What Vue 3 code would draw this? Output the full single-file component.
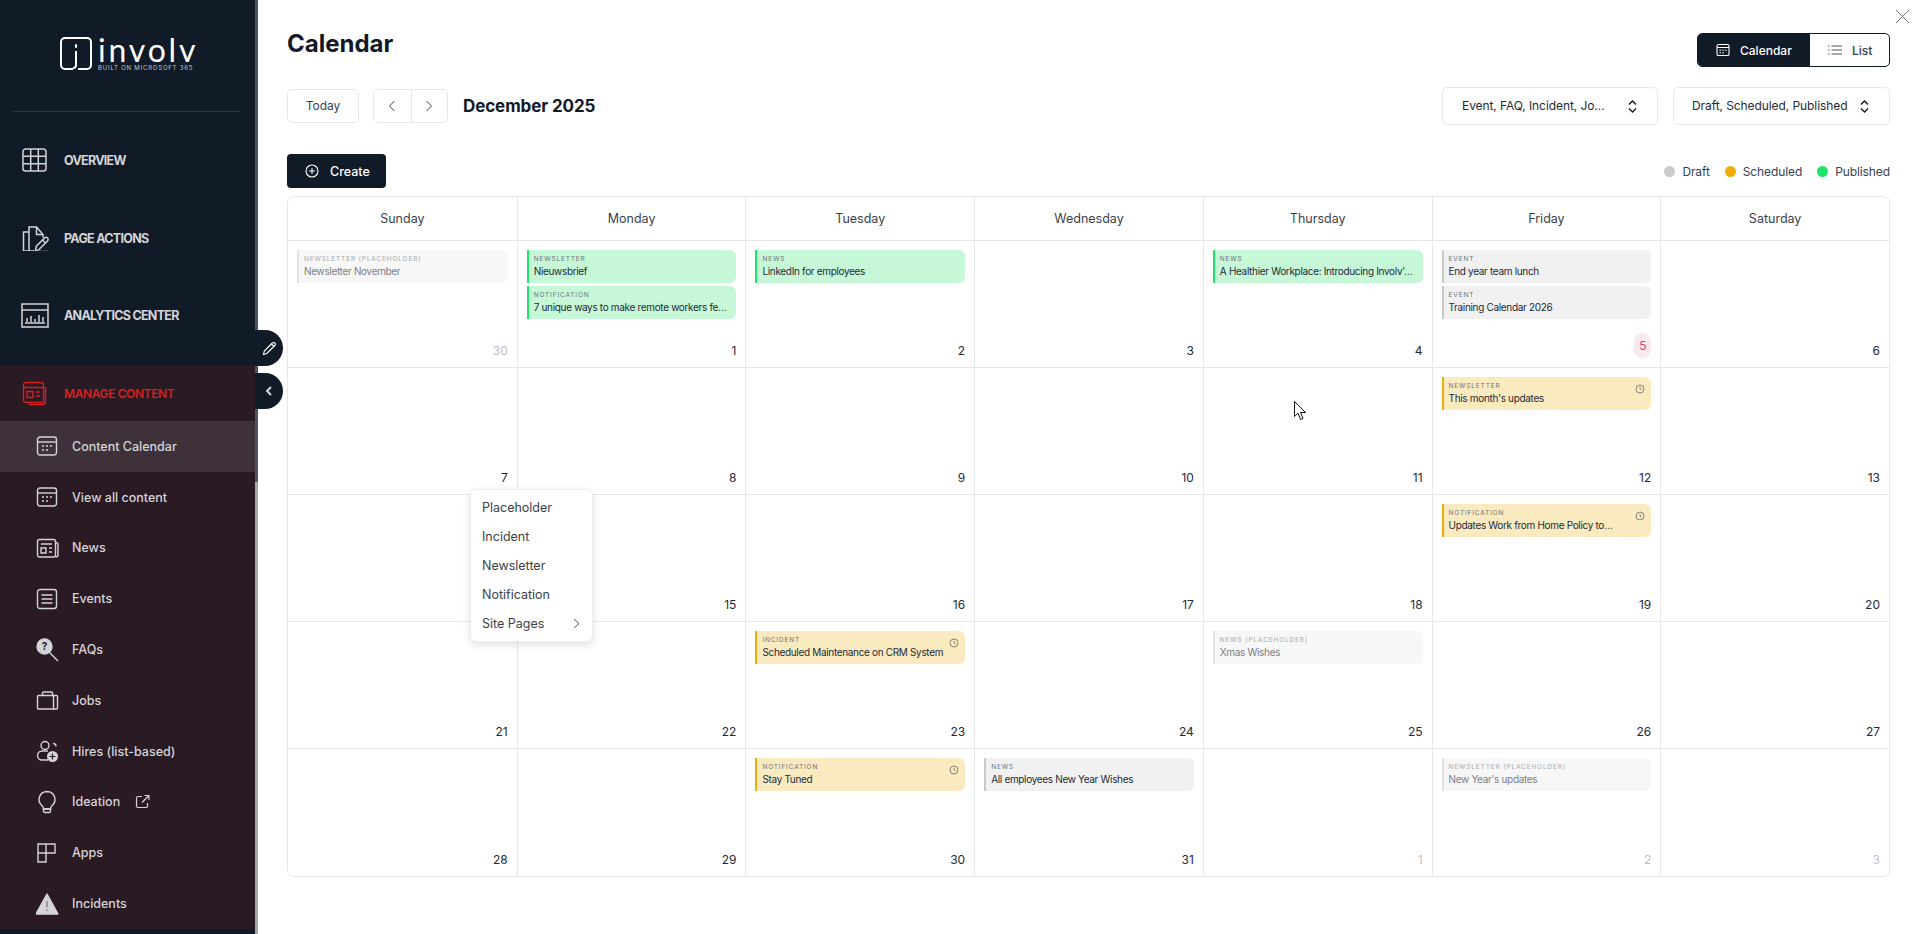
<script setup>
const sideTop = [
  { name: 'OVERVIEW', paths: ['M4.500 1h18a2.500 2.500 0 0 1 2.500 2.500v17a2.500 2.500 0 0 1-2.500 2.500h-18A2.500 2.500 0 0 1 2 20.500v-17A2.500 2.500 0 0 1 4.500 1z', 'M2 8.300h23M2 15.700h23M9.700 1v22M17.300 1v22'] },
  { name: 'PAGE ACTIONS', paths: ['M13 25H8V1h7.500L22 8.500v3', 'M15.500 1v7.500H22', 'M8 6H2.500v19H9', 'M14 26l1.500-6 8-8a2.100 2.100 0 0 1 3 3l-8 8z', 'M21.500 14l3 3', 'M18 25.500h9'] },
  { name: 'ANALYTICS CENTER', paths: ['M1 1h26v23H1z', 'M1 7h26', 'M6 19v-4M10 19v-6M14 19v-3M18 19v-7M22 19v-5', 'M4 20h20'] }
]

const calendarIcon = ['M4 3h14a2.500 2.500 0 0 1 2.500 2.500v13A2.500 2.500 0 0 1 18 21H4a2.500 2.500 0 0 1-2.500-2.500v-13A2.500 2.500 0 0 1 4 3z', 'M1.500 8h19', 'M6 12h2M10 12h2M14 12h2M6 16h2M10 16h2']

const sideItems = [
  { name: 'Content Calendar', active: true, paths: calendarIcon },
  { name: 'View all content', paths: calendarIcon },
  { name: 'News', paths: ['M3.500 3.500h14a2 2 0 0 1 2 2v13.500a2 2 0 0 1-2 2h-14a2 2 0 0 1-2-2V5.500a2 2 0 0 1 2-2z', 'M5 8h11M5 12h5v5H5zM13 12h3M13 16h3', 'M19.500 6.500c1.500 0 2.500.8 2.500 2v10.500c0 1.200-1 2-2.500 2'] },
  { name: 'Events', paths: ['M4 2.500h14A2.500 2.500 0 0 1 20.500 5v14a2.500 2.500 0 0 1-2.500 2.500H4A2.500 2.500 0 0 1 1.500 19V5A2.500 2.500 0 0 1 4 2.500z', 'M5.500 8h11M5.500 12h11M5.500 16h11'] },
  { name: 'FAQs', faq: true, paths: ['M13 14l9 9'] },
  { name: 'Jobs', paths: ['M2.500 7.500h18a1 1 0 0 1 1 1V20a1 1 0 0 1-1 1h-18a1 1 0 0 1-1-1V8.500a1 1 0 0 1 1-1z', 'M6.500 7.500V5a1 1 0 0 1 1-1h8a1 1 0 0 1 1 1v2.500', 'M17.500 7.500V21'] },
  { name: 'Hires (list-based)', hire: true, paths: ['M9 2.500a4 4 0 1 1 0 8 4 4 0 0 1 0-8z', 'M17 4.500a3 3 0 0 1 3 3', 'M12 21H6a4.500 4.500 0 0 1 0-9h6'] },
  { name: 'Ideation', external: true, paths: ['M11 1.500a8 8 0 0 1 5 14.200c-1 .9-1.500 2-1.500 3.300h-7c0-1.300-.5-2.400-1.500-3.300A8 8 0 0 1 11 1.500z', 'M7.500 19h7v2a1.500 1.500 0 0 1-1.500 1.500H9A1.500 1.500 0 0 1 7.500 21z'] },
  { name: 'Apps', paths: ['M2 3h8v9H2zM10 3h9v9h-9zM2 12h8v9H2z'] },
  { name: 'Incidents', warn: true, paths: [] }
]

const weekDays = ['Sunday', 'Monday', 'Tuesday', 'Wednesday', 'Thursday', 'Friday', 'Saturday']

const ev = (type, label, title, clock = false) => ({ type, label, title, clock })

const days = [
  { n: 30, muted: true, events: [ev('ghost', 'Newsletter (placeholder)', 'Newsletter November')] },
  { n: 1, events: [ev('pub', 'Newsletter', 'Nieuwsbrief'), ev('pub', 'Notification', '7 unique ways to make remote workers fe…')] },
  { n: 2, events: [ev('pub', 'News', 'LinkedIn for employees')] },
  { n: 3 },
  { n: 4, events: [ev('pub', 'News', "A Healthier Workplace: Introducing Involv'…")] },
  { n: 5, today: true, events: [ev('draft', 'Event', 'End year team lunch'), ev('draft', 'Event', 'Training Calendar 2026')] },
  { n: 6 },
  { n: 7 }, { n: 8 }, { n: 9 }, { n: 10 }, { n: 11 },
  { n: 12, events: [ev('sched', 'Newsletter', "This month's updates", true)] },
  { n: 13 },
  { n: 14 }, { n: 15 }, { n: 16 }, { n: 17 }, { n: 18 },
  { n: 19, events: [ev('sched', 'Notification', 'Updates Work from Home Policy to…', true)] },
  { n: 20 },
  { n: 21 }, { n: 22 },
  { n: 23, events: [ev('sched', 'Incident', 'Scheduled Maintenance on CRM System', true)] },
  { n: 24 },
  { n: 25, events: [ev('ghost', 'News (placeholder)', 'Xmas Wishes')] },
  { n: 26 }, { n: 27 },
  { n: 28 }, { n: 29 },
  { n: 30, events: [ev('sched', 'Notification', 'Stay Tuned', true)] },
  { n: 31, events: [ev('draft', 'News', 'All employees New Year Wishes')] },
  { n: 1, muted: true },
  { n: 2, muted: true, events: [ev('ghost', 'Newsletter (placeholder)', "New Year's updates")] },
  { n: 3, muted: true }
]

const menu = ['Placeholder', 'Incident', 'Newsletter', 'Notification']
</script>

<template>
  <div class="page">
    <aside class="sidebar">
      <div class="side-scroll">
        <div class="logo">
          <svg class="logo-mark" width="32" height="33" viewBox="0 0 32 33" fill="none" stroke="#fff" stroke-width="2">
            <path d="M13 32H5a4 4 0 0 1-4-4V5a4 4 0 0 1 4-4h22a4 4 0 0 1 4 4v23a4 4 0 0 1-4 4h-9" />
            <path d="M16 14v14a3 3 0 0 1-3 3" />
            <path d="M16 8v2" stroke-linecap="round" />
          </svg>
          <div class="logo-text">
            <div class="logo-name">involv</div>
            <div class="logo-sub">BUILT ON MICROSOFT 365</div>
          </div>
        </div>
        <div class="side-rule"></div>

        <div v-for="item in sideTop" :key="item.name" class="top-item">
          <svg width="28" height="25" viewBox="0 0 28 25" fill="none" stroke="#d4d4d8" stroke-width="1.500">
            <path v-for="d in item.paths" :key="d" :d="d" />
          </svg>
          <span>{{ item.name }}</span>
        </div>

        <div class="manage">
          <div class="manage-head">
            <svg width="25" height="25" viewBox="0 0 25 25" fill="none" stroke="#d81e1e" stroke-width="1.400">
              <path d="M4 1.500h15a2.500 2.500 0 0 1 2.500 2.500v15a2.500 2.500 0 0 1-2.500 2.500H4A2.500 2.500 0 0 1 1.500 19V4A2.500 2.500 0 0 1 4 1.500z" />
              <path d="M1.500 6.500h20M5 10.500h6v6H5zM14 11h4M14 15h4" />
              <path d="M23.500 6v14.500a3 3 0 0 1-3 3H7" />
            </svg>
            <span>MANAGE CONTENT</span>
          </div>
          <div v-for="item in sideItems" :key="item.name" class="side-item" :class="{ active: item.active }">
            <svg class="side-icon" width="24" height="24" viewBox="0 0 24 24" fill="none" stroke="#d4d4d8" stroke-width="1.400">
              <template v-if="item.faq">
                <circle cx="8.500" cy="8.500" r="7.500" fill="#d4d4d8" />
                <text x="8.500" y="12" text-anchor="middle" class="faq-mark">?</text>
              </template>
              <path v-for="d in item.paths" :key="d" :d="d" />
              <template v-if="item.hire">
                <circle cx="16.500" cy="17.500" r="5.500" fill="#d4d4d8" stroke="none" />
                <path d="M16.500 14.500v6M13.500 17.500h6" stroke="#2a1a24" stroke-width="1.200" />
              </template>
              <template v-if="item.warn">
                <path d="M11 2L22 22H0z" fill="#d4d4d8" stroke="#d4d4d8" stroke-linejoin="round" />
                <path d="M11 9v6.500M11 17.500v1.500" stroke="#7b6f76" stroke-width="1.200" />
              </template>
            </svg>
            <span>{{ item.name }}</span>
            <svg v-if="item.external" class="ext" width="15" height="15" viewBox="0 0 15 15" fill="none" stroke="#d4d4d8" stroke-width="1.200">
              <path d="M7 2.500H3A1.500 1.500 0 0 0 1.500 4v8A1.500 1.500 0 0 0 3 13.500h8a1.500 1.500 0 0 0 1.500-1.500V9" />
              <path d="M7 8.500l7-7M9.500 1.500h4.500V6" />
            </svg>
          </div>
        </div>
      </div>
      <div class="scrollbar"><div class="scroll-thumb"></div></div>
    </aside>

    <main class="main">
      <div class="title-row">
        <h1>Calendar</h1>
        <div class="toggle">
          <div class="toggle-on">
            <svg width="14" height="14" viewBox="0 0 14 14" fill="none" stroke="#fff" stroke-width="1.100">
              <path d="M2.500 1.500h9a1.500 1.500 0 0 1 1.500 1.500v8a1.500 1.500 0 0 1-1.500 1.500h-9A1.500 1.500 0 0 1 1 11V3a1.500 1.500 0 0 1 1.500-1.500z" />
              <path d="M1 4.500h12M3.500 7.300h1.500M6.300 7.300h1.500M9 7.300h1.500M3.500 9.800h1.500M6.300 9.800h1.500" />
            </svg>
            Calendar
          </div>
          <div class="toggle-off">
            <svg width="14" height="10" viewBox="0 0 14 10" fill="none" stroke="#4b5563" stroke-width="1">
              <path d="M0 1h1.500M0 5h1.500M0 9h1.500M3.500 1H14M3.500 5H14M3.500 9H14" />
            </svg>
            List
          </div>
        </div>
      </div>

      <div class="nav-row">
        <button class="btn today">Today</button>
        <div class="btn-pair">
          <button class="btn-arrow">
            <svg width="8" height="12" viewBox="0 0 8 12" fill="none" stroke="#374151" stroke-width="1"><path d="M6.500 1L1.500 6l5 5" /></svg>
          </button>
          <button class="btn-arrow">
            <svg width="8" height="12" viewBox="0 0 8 12" fill="none" stroke="#374151" stroke-width="1"><path d="M1.500 1l5 5-5 5" /></svg>
          </button>
        </div>
        <div class="month">December 2025</div>
        <div class="select first">
          <span class="select-text">Event, FAQ, Incident, Jo…</span>
          <svg width="9" height="13" viewBox="0 0 9 13" fill="none" stroke="#111827" stroke-width="1.400"><path d="M1 4.500L4.500 1 8 4.500M1 8.500L4.500 12 8 8.500" /></svg>
        </div>
        <div class="select second">
          <span class="select-text">Draft, Scheduled, Published</span>
          <svg width="9" height="13" viewBox="0 0 9 13" fill="none" stroke="#111827" stroke-width="1.400"><path d="M1 4.500L4.500 1 8 4.500M1 8.500L4.500 12 8 8.500" /></svg>
        </div>
      </div>

      <div class="action-row">
        <button class="create">
          <svg width="14" height="14" viewBox="0 0 14 14" fill="none" stroke="#fff" stroke-width="1.100">
            <circle cx="7" cy="7" r="6" />
            <path d="M7 4v6M4 7h6" />
          </svg>
          Create
        </button>
        <div class="legend">
          <span class="legend-item"><i class="dot grey"></i>Draft</span>
          <span class="legend-item"><i class="dot amber"></i>Scheduled</span>
          <span class="legend-item"><i class="dot green"></i>Published</span>
        </div>
      </div>

      <div class="calendar">
        <div v-for="d in weekDays" :key="d" class="weekday">{{ d }}</div>
        <div v-for="(day, i) in days" :key="i" class="cell">
          <div v-for="e in day.events" :key="e.title" class="event" :class="e.type">
            <div class="event-body">
              <div class="event-label">{{ e.label }}</div>
              <div class="event-title">{{ e.title }}</div>
            </div>
            <svg v-if="e.clock" class="clock" width="10" height="10" viewBox="0 0 10 10" fill="none" stroke="#6b6a60" stroke-width="0.800">
              <circle cx="5" cy="5" r="4" />
              <path d="M5 2.800V5l1.500.8" />
            </svg>
          </div>
          <div class="day-num" :class="{ muted: day.muted, today: day.today }">{{ day.n }}</div>
        </div>
      </div>
    </main>

    <!-- overlays -->
    <div class="float-btn pencil">
      <svg width="15" height="15" viewBox="0 0 15 15" fill="none" stroke="#fff" stroke-width="1.100">
        <path d="M1.500 13.500l.8-3.500 8-8a1.500 1.500 0 0 1 2.500 2.500l-8 8z" />
        <path d="M9.500 3l2.500 2.500" />
      </svg>
    </div>
    <div class="float-btn collapse">
      <svg width="8" height="12" viewBox="0 0 8 12" fill="none" stroke="#d4d4d8" stroke-width="2"><path d="M6 2L2 6l4 4" /></svg>
    </div>

    <div class="popup">
      <div v-for="m in menu" :key="m" class="popup-item">{{ m }}</div>
      <div class="popup-item">
        Site Pages
        <svg width="7" height="11" viewBox="0 0 7 11" fill="none" stroke="#4b5563" stroke-width="1"><path d="M1 1l5 4.500-5 4.500" /></svg>
      </div>
    </div>

    <svg class="close" width="15" height="15" viewBox="0 0 15 15" fill="none" stroke="#6b7280" stroke-width="1"><path d="M1 1l13 13M14 1L1 14" /></svg>

    <svg class="cursor" width="13" height="20" viewBox="0 0 13 20">
      <path d="M.5.500v15l3.500-3.300 2.500 6.300 2.500-1-2.500-6h5z" fill="#fff" stroke="#111" stroke-width="1" />
    </svg>
  </div>
</template>

<style>
html, body { margin: 0; overflow: hidden; background: #fff; }
</style>

<style scoped>
* { box-sizing: border-box; }

.page {
  position: relative;
  display: flex;
  width: 1919px;
  height: 934px;
  overflow: hidden;
  font-family: Inter, "Noto Sans", sans-serif;
  color: #111827;
  background: #fff;
}

.sidebar {
  display: flex;
  flex: 0 0 258px;
  height: 100%;
  background: #111a27;
}
.side-scroll {
  flex: 1;
  min-width: 0;
}
.scrollbar {
  width: 3px;
  background: #a3a6aa;
}
.scroll-thumb {
  height: 482px;
  background: #4b5563;
}

.logo {
  display: flex;
  gap: 6px;
  padding: 36px 0 0 60px;
  height: 111px;
}
.logo-mark { margin-top: 1px; }
.logo-name {
  font-family: Lato, sans-serif;
  font-weight: 400;
  font-size: 32px;
  letter-spacing: 2.800px;
  line-height: 27px;
  color: #fff;
}
.logo-sub {
  font-size: 6px;
  letter-spacing: 0.800px;
  line-height: 9px;
  color: #c3c5c9;
}
.side-rule {
  margin: 0 14px 0 13px;
  height: 1px;
  background: #2b3440;
}

.top-item {
  display: flex;
  align-items: center;
  gap: 15px;
  height: 77.500px;
  padding-left: 21px;
  font-size: 12.500px;
  font-weight: 700;
  letter-spacing: -0.720px;
  color: #d4d4d8;
}
.top-item:nth-child(3) { margin-top: 10px; }

.manage {
  margin-top: 10.500px;
  background: #2a1a24;
}
.manage-head {
  display: flex;
  align-items: center;
  gap: 17px;
  height: 56px;
  padding-left: 22px;
  font-size: 12px;
  font-weight: 600;
  letter-spacing: -0.400px;
  color: #d81e1e;
}
.side-item {
  display: flex;
  align-items: center;
  gap: 12px;
  height: 50.800px;
  padding-left: 36px;
  font-size: 12.500px;
  font-weight: 500;
  color: #d4d4d8;
}
.side-item.active { background: #3e3139; }
.side-icon { flex: none; }
.faq-mark {
  font-family: Inter, sans-serif;
  font-size: 10px;
  font-weight: 700;
  fill: #2a1a24;
  stroke: none;
}
.ext { margin-left: 3px; }

.main {
  flex: 1;
  min-width: 0;
  padding: 0 29px;
}

.title-row {
  display: flex;
  justify-content: space-between;
  align-items: flex-start;
  height: 87px;
  padding-top: 33px;
}
h1 {
  margin: -1px 0 0;
  font-size: 24px;
  font-weight: 700;
  line-height: 24px;
}
.toggle {
  display: flex;
  height: 34px;
  border: 1px solid #111a27;
  border-radius: 5px;
  overflow: hidden;
  font-size: 12px;
  font-weight: 500;
}
.toggle-on {
  display: flex;
  align-items: center;
  gap: 10px;
  width: 112px;
  padding-left: 18px;
  background: #111a27;
  color: #fff;
}
.toggle-off {
  display: flex;
  align-items: center;
  gap: 10px;
  width: 79px;
  padding-left: 18px;
  color: #374151;
}

.nav-row {
  display: flex;
  align-items: center;
  height: 38px;
}
.btn {
  height: 34px;
  padding: 0 0 2px;
  border: 1px solid #e5e7eb;
  border-radius: 5px;
  background: #fff;
  font: 400 12px Inter, sans-serif;
  color: #374151;
}
.today { width: 72px; }
.btn-pair {
  display: flex;
  margin-left: 14px;
  height: 34px;
  border: 1px solid #e5e7eb;
  border-radius: 5px;
  overflow: hidden;
}
.btn-arrow {
  display: flex;
  align-items: center;
  justify-content: center;
  width: 36.500px;
  border: none;
  background: #fff;
  padding: 0;
}
.btn-arrow + .btn-arrow { border-left: 1px solid #e5e7eb; }
.month {
  margin: 0 0 1px 15px;
  font-size: 17px;
  font-weight: 700;
  letter-spacing: -0.100px;
}
.select {
  display: flex;
  align-items: center;
  justify-content: space-between;
  height: 38px;
  border: 1px solid #e5e7eb;
  border-radius: 5px;
  font-size: 12px;
  letter-spacing: -0.080px;
  color: #1f2937;
}
.select.first {
  width: 216px;
  margin-left: auto;
  padding: 0 20px 0 19px;
}
.select.second {
  width: 217px;
  margin-left: 15px;
  padding: 0 20px 0 18px;
}
.select-text {
  margin: 0 12px 1px 0;
  white-space: nowrap;
}

.action-row {
  display: flex;
  justify-content: space-between;
  align-items: center;
  height: 34px;
  margin-top: 29px;
  margin-bottom: 8px;
}
.create {
  display: flex;
  align-items: center;
  gap: 11px;
  width: 99px;
  height: 34px;
  padding: 0 0 0 18px;
  border: none;
  border-radius: 4px;
  background: #111a27;
  color: #fff;
  font: 500 12.500px Inter, sans-serif;
}
.legend {
  display: flex;
  gap: 15px;
  font-size: 12px;
  letter-spacing: -0.100px;
  color: #374151;
}
.legend-item {
  display: flex;
  align-items: center;
  gap: 7px;
}
.dot {
  width: 11px;
  height: 11px;
  border-radius: 50%;
}
.dot.grey { background: #cbcbcb; }
.dot.amber { background: #f0ab0e; }
.dot.green { background: #20e36b; }

.calendar {
  display: grid;
  grid-template-columns: repeat(7, 1fr);
  grid-template-rows: 44px repeat(5, 127px);
  width: 1603px;
  border: 1px solid #e5e7eb;
  border-radius: 7px;
  overflow: hidden;
}
.weekday {
  display: flex;
  align-items: center;
  justify-content: center;
  font-size: 12.500px;
  color: #3a3f4b;
  border-bottom: 1px solid #e5e7eb;
  border-left: 1px solid #e5e7eb;
}
.weekday:first-child { border-left: none; }
.cell {
  display: flex;
  flex-direction: column;
  gap: 3px;
  min-width: 0;
  padding: 9px 9px 9px;
  border-bottom: 1px solid #e5e7eb;
  border-left: 1px solid #e5e7eb;
}
.cell:nth-child(7n + 1) { border-left: none; }
.cell:nth-last-child(-n + 7) { border-bottom: none; }

.event {
  display: flex;
  justify-content: space-between;
  flex: none;
  height: 33px;
  padding: 5px 6px 0 5px;
  border-left: 2px solid;
  border-radius: 0 6px 6px 0;
}
.event-body { min-width: 0; }
.event-label {
  font-size: 6.500px;
  font-weight: 400;
  letter-spacing: 0.850px;
  line-height: 9px;
  text-transform: uppercase;
  color: #6b7280;
}
.event-title {
  margin-top: 1px;
  font-size: 10px;
  letter-spacing: -0.330px;
  line-height: 13px;
  white-space: nowrap;
  color: #1f2937;
}
.clock { flex: none; margin-top: 2px; margin-left: 4px; }
.event.pub { background: #c6f8d7; border-color: #20e36b; }
.event.draft { background: #f1f1f1; border-color: #c9c9c9; }
.event.sched { background: #faeabf; border-color: #f0ab0e; }
.event.ghost { background: #f7f7f7; border-color: #e2e2e2; }
.event.ghost .event-label { color: #a7a9ad; }
.event.ghost .event-title { color: #7c7f85; }

.day-num {
  margin-top: auto;
  align-self: flex-end;
  font-size: 12px;
  line-height: 15px;
  color: #1f2937;
}
.day-num.muted { color: #bdbfc3; }
.day-num.today {
  display: flex;
  align-items: center;
  justify-content: center;
  width: 17px;
  height: 25px;
  border-radius: 9px;
  background: #f9e8ee;
  color: #d6446f;
}

.float-btn {
  position: absolute;
  left: 255px;
  display: flex;
  align-items: center;
  justify-content: center;
  width: 28px;
  height: 36px;
  border-radius: 0 18px 18px 0;
  background: #111a27;
}
.pencil { top: 330px; }
.collapse { top: 373px; }

.popup {
  position: absolute;
  left: 470px;
  top: 489px;
  width: 123px;
  height: 153px;
  padding: 3px 0;
  background: #fff;
  border: 1px solid #eceef1;
  border-radius: 6px;
  box-shadow: 0 3px 8px rgba(0, 0, 0, 0.12);
}
.popup-item {
  display: flex;
  align-items: center;
  justify-content: space-between;
  height: 28.900px;
  padding: 0 12px 0 11px;
  font-size: 12.500px;
  color: #3a3f4b;
}

.close {
  position: absolute;
  left: 1895px;
  top: 9px;
}
.cursor {
  position: absolute;
  left: 1294px;
  top: 401px;
}
</style>
